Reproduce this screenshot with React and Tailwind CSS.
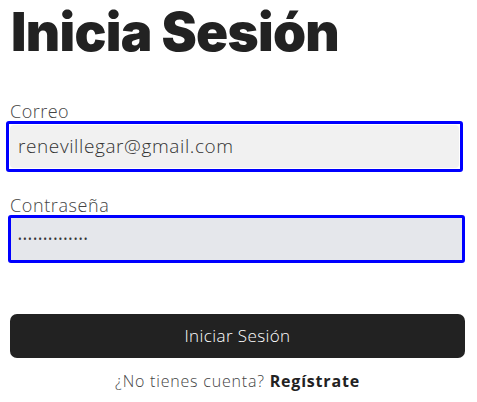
export default function App() {
  return (
    <div className="w-[477px] h-[402px] bg-white overflow-hidden" style={{ fontFamily: '"Open Sans", sans-serif' }}>
      <div className="pl-[10px] pr-[12px] pt-[2px] flex flex-col">
        <h1 className="pl-[1px] text-[53px] leading-[61px] font-black text-[#222] tracking-[-0.7px]" style={{ fontFamily: 'Inter, sans-serif' }}>
          Inicia Sesión
        </h1>
        <label className="mt-[38px] text-[18px] leading-[20px] font-light text-[#444] tracking-[0.5px]">Correo</label>
        <div className="-ml-[4px] mr-[2px] h-[51px] border-[3px] border-[#0000ff] rounded-[3px] p-[1px]">
          <div className="h-full bg-[#f1f1f1] rounded-[4px] flex items-center pl-[8px] text-[19px] font-light text-[#333] tracking-[0.6px]">
            renevillegar@gmail.com
          </div>
        </div>
        <label className="mt-[23px] text-[18px] leading-[20px] font-light text-[#444] tracking-[0.6px]">Contraseña</label>
        <div className="-ml-[2px] h-[48px] border-[3px] border-[#0000ff] rounded-[3px] bg-[#e5e7eb] flex items-center pl-[7px] text-[10px] text-[#333] tracking-[1.3px]">
          ••••••••••••••
        </div>
        <button className="mt-[51px] h-[44px] w-full bg-[#222222] rounded-[7px] text-white text-[17px] font-light tracking-[0.4px]">
          Iniciar Sesión
        </button>
        <p className="mt-[11px] text-center text-[16px] font-light text-[#444] tracking-[0.8px]">
          ¿No tienes cuenta? <span className="font-bold text-[#222]">Regístrate</span>
        </p>
      </div>
    </div>
  );
}
